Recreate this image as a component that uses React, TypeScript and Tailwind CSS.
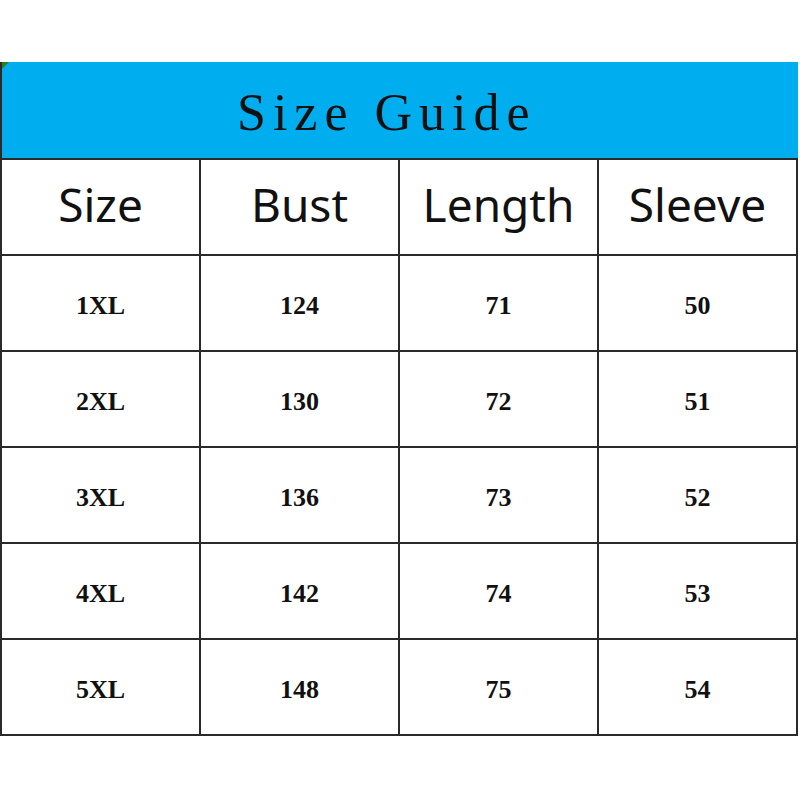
import React from "react"

const rows = [
  ["1XL", "124", "71", "50"],
  ["2XL", "130", "72", "51"],
  ["3XL", "136", "73", "52"],
  ["4XL", "142", "74", "53"],
  ["5XL", "148", "75", "54"],
]

const heads = ["Size", "Bust", "Length", "Sleeve"]

export default function App() {
  return (
    <div className="w-[800px] h-[800px] bg-white pt-[62px]">
      {/* Title bar */}
      <div className="relative w-[798px] h-[96px] bg-[#00aeef] border-l-2 border-[#2a2a2a] pl-[235px] pt-[25px]">
        <svg className="absolute left-0 top-0" width="8" height="8" viewBox="0 0 8 8">
          <path d="M0 0 L7 0 L0 7 Z" fill="#2f7d1e" />
        </svg>
        <h1
          className="text-[52px] leading-none tracking-[7px] text-[#111]"
          style={{ fontFamily: '"Liberation Serif", serif' }}
        >
          Size Guide
        </h1>
      </div>

      {/* Table */}
      <div className="w-[798px] grid grid-cols-4 border-l-2 border-t-2 border-[#2a2a2a]">
        {heads.map((h) => (
          <div
            key={h}
            className="h-[96px] flex items-center justify-center pb-[6px] border-r-2 border-b-2 border-[#2a2a2a] text-[46px] text-[#111]"
            style={{ fontFamily: '"Noto Sans", sans-serif' }}
          >
            {h}
          </div>
        ))}
        {rows.map((row) =>
          row.map((cell, i) => (
            <div
              key={row[0] + i}
              className="h-[96px] flex items-center justify-center pt-[4px] border-r-2 border-b-2 border-[#2a2a2a] text-[26px] font-bold text-[#111]"
              style={{ fontFamily: '"Liberation Serif", serif' }}
            >
              {cell}
            </div>
          ))
        )}
      </div>
    </div>
  )
}
